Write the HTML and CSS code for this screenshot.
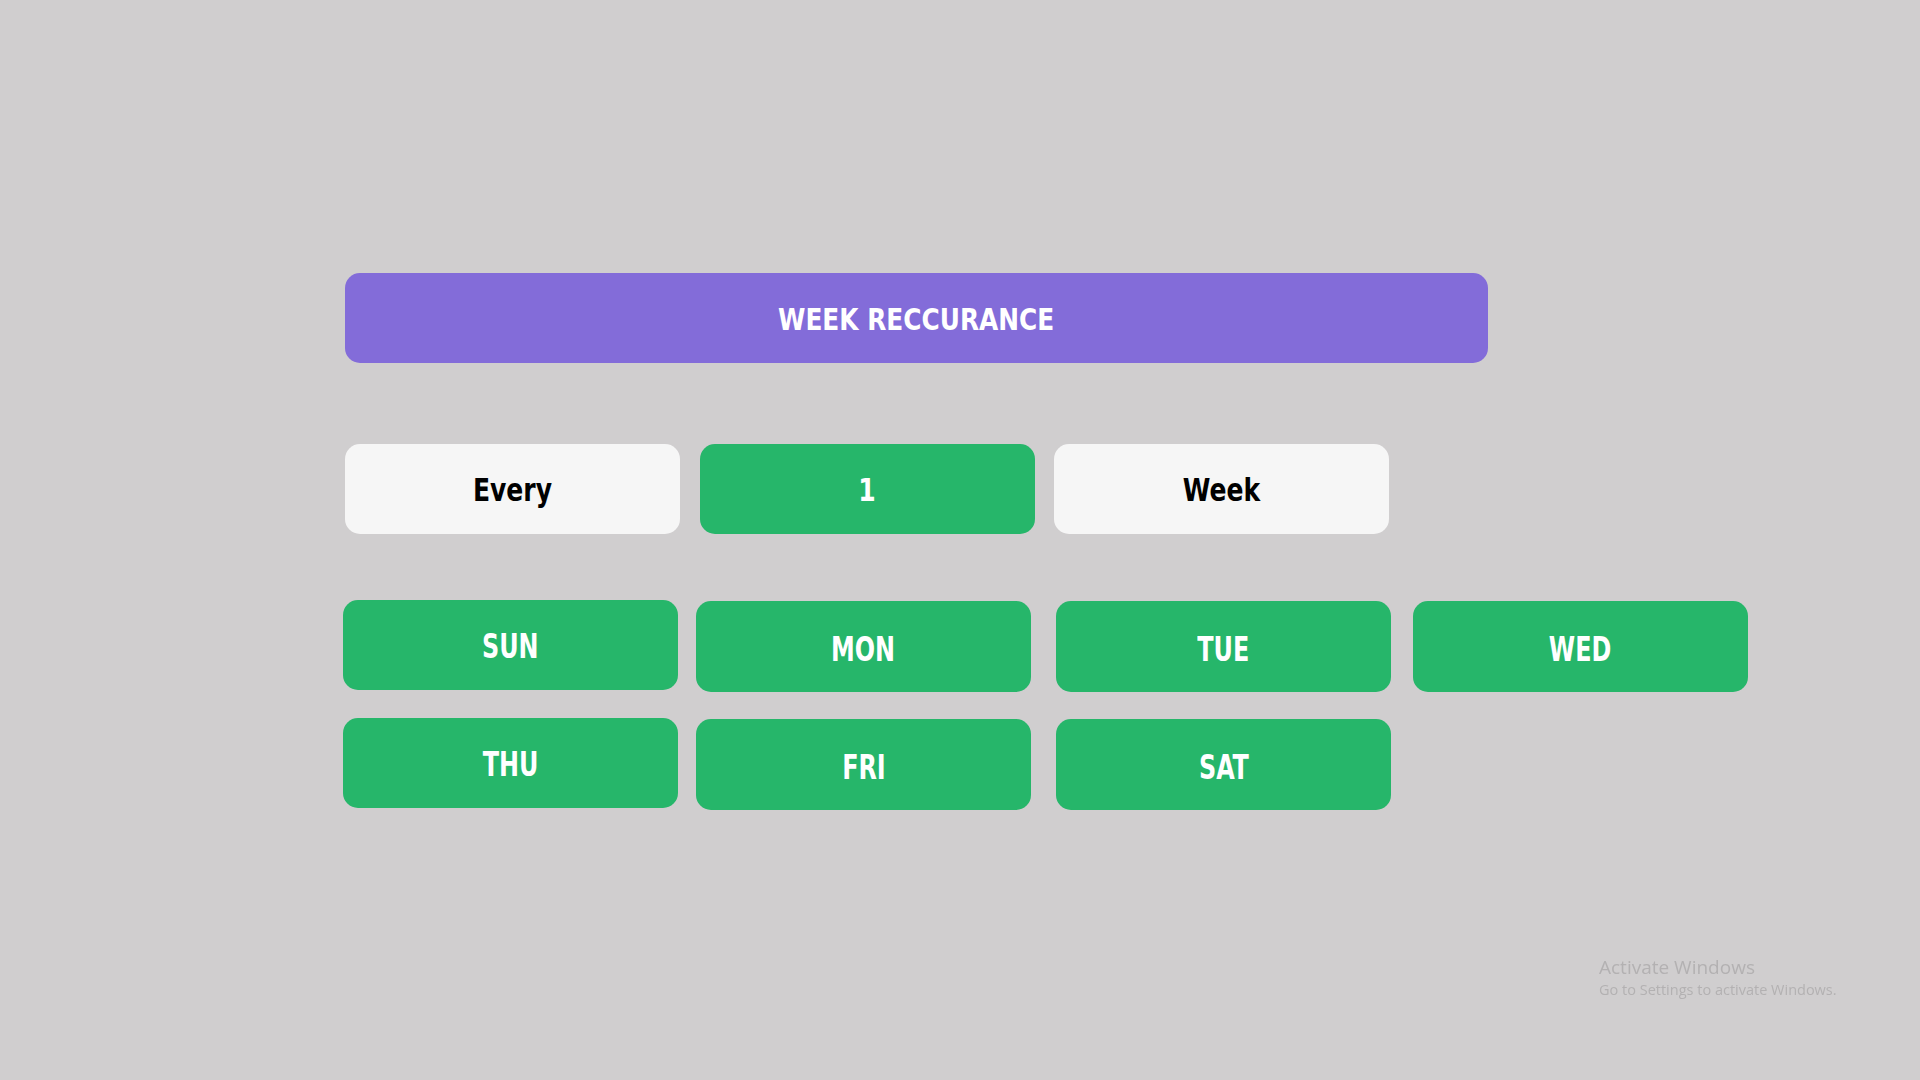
FILE: index.html
```html
<!DOCTYPE html>
<html lang="en">
<head>
<meta charset="utf-8">
<title>Week Reccurance</title>
<link rel="stylesheet" href="styles.css">
</head>
<body>
<main class="page">
  <div class="header"><span class="label">WEEK RECCURANCE</span></div>
  <div class="every-row">
    <div class="box light"><span class="label">Every</span></div>
    <div class="box green"><span class="label">1</span></div>
    <div class="box light week"><span class="label">Week</span></div>
  </div>
  <div class="days">
    <div class="box green day"><span class="label">SUN</span></div>
    <div class="box green day low"><span class="label">MON</span></div>
    <div class="box green day low"><span class="label">TUE</span></div>
    <div class="box green day low"><span class="label">WED</span></div>
    <div class="box green day"><span class="label">THU</span></div>
    <div class="box green day low"><span class="label">FRI</span></div>
    <div class="box green day low"><span class="label">SAT</span></div>
  </div>
</main>
<div class="watermark">
  <div class="wm-title">Activate Windows</div>
  <div class="wm-sub">Go to Settings to activate Windows.</div>
</div>
</body>
</html>
```
FILE: styles.css
```css
html, body {
  margin: 0;
  padding: 0;
}
body {
  background: #d0cecf;
  width: 1920px;
  height: 1080px;
  overflow: hidden;
  font-family: "DejaVu Sans Condensed", "Liberation Sans", sans-serif;
  font-weight: 700;
}
.page {
  padding: 273px 0 0 345px;
  display: flex;
  flex-direction: column;
  align-items: flex-start;
}
.label {
  display: inline-block;
  white-space: nowrap;
}
.header {
  width: 1143px;
  height: 90px;
  background: #836cd9;
  border-radius: 15px;
  color: #ffffff;
  font-size: 30px;
  display: flex;
  align-items: center;
  justify-content: center;
}
.header .label {
  transform: scaleX(0.92);
  padding-top: 3px;
}
.every-row {
  margin-top: 81px;
  display: flex;
  gap: 20px;
}
.every-row .week {
  margin-left: -1px;
}
.every-row .label {
  transform: scaleX(0.87);
  padding-top: 2px;
}
.box {
  width: 335px;
  height: 90px;
  border-radius: 15px;
  display: flex;
  align-items: center;
  justify-content: center;
  font-size: 32px;
  box-sizing: border-box;
}
.light {
  background: #f6f6f6;
  color: #000000;
}
.green {
  background: #26b66a;
  color: #ffffff;
}
.days {
  margin-top: 66px;
  margin-left: -2px;
  display: grid;
  grid-template-columns: 353px 360px 357px 335px;
  row-gap: 27px;
}
.day {
  height: 90px;
  padding-top: 2px;
  font-size: 34px;
}
.day .label {
  transform: scaleX(0.78);
}
.day.low {
  height: 91px;
  margin-top: 1px;
  margin-bottom: -1px;
  padding-top: 4px;
}
.watermark {
  position: fixed;
  left: 1599px;
  top: 954px;
  font-family: "Open Sans", "Noto Sans", sans-serif;
  font-weight: 400;
  color: #b3b1b2;
}
.wm-title {
  font-size: 19px;
  line-height: 26px;
}
.wm-sub {
  font-size: 14.5px;
  line-height: 20px;
}
```
